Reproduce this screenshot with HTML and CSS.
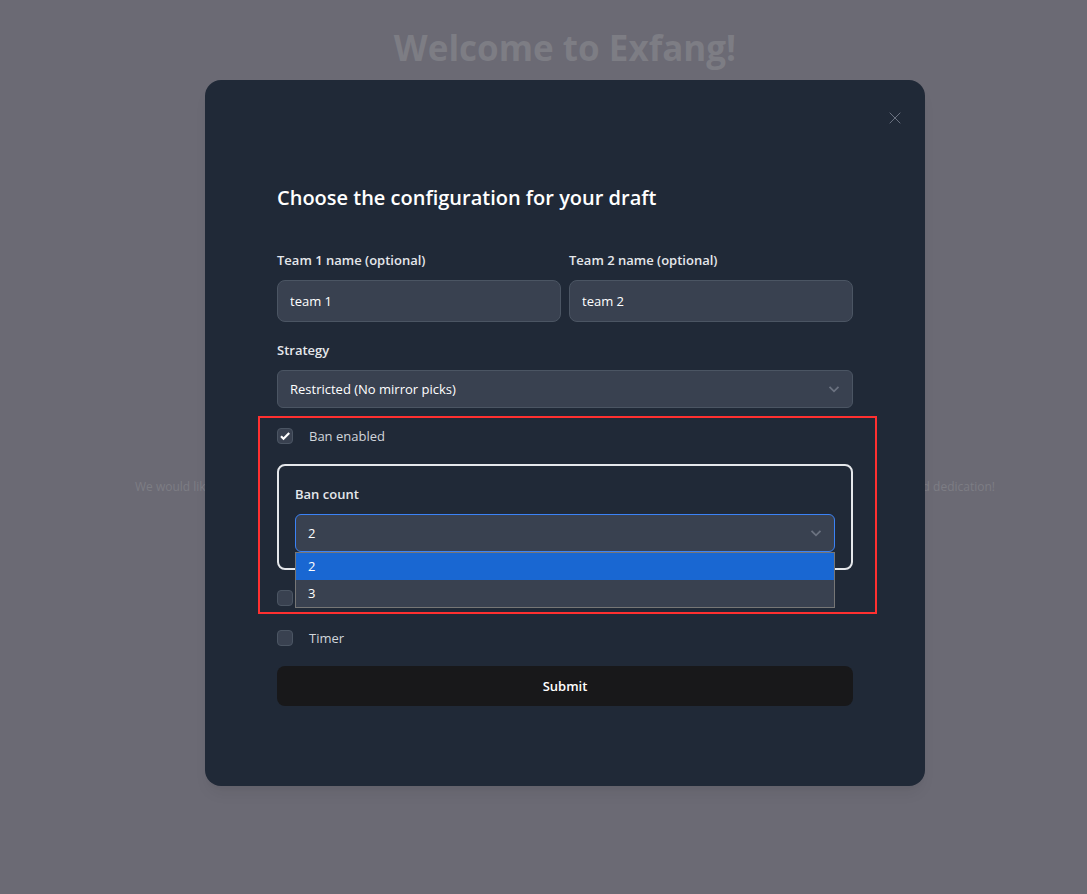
FILE: index.html
```html
<!DOCTYPE html>
<html lang="en">
<head>
  <meta charset="utf-8">
  <title>Exfang</title>
  <link rel="stylesheet" href="styles.css">
</head>
<body>
  <main class="page">
    <h1 class="page-title">Welcome to Exfang!</h1>
    <p class="thanks"><span>We would like</span><span>and dedication!</span></p>
  </main>

  <div class="backdrop">
    <section class="modal" role="dialog" aria-modal="true" aria-labelledby="dialog-title">
      <button class="close" type="button" aria-label="Close">
        <svg width="12" height="12" viewBox="0 0 12 12" fill="none" stroke="currentColor"><path d="M.7.7l10.6 10.6M11.3.7L.7 11.3"/></svg>
      </button>
      <h2 class="dialog-title" id="dialog-title">Choose the configuration for your draft</h2>
      <form class="form">
        <div class="teams">
          <div class="field">
            <label for="team1">Team 1 name (optional)</label>
            <input class="text-input" id="team1" type="text" value="team 1">
          </div>
          <div class="field">
            <label for="team2">Team 2 name (optional)</label>
            <input class="text-input" id="team2" type="text" value="team 2">
          </div>
        </div>

        <div class="field">
          <label for="strategy">Strategy</label>
          <div class="select-wrap">
            <select class="select" id="strategy"><option>Restricted (No mirror picks)</option></select>
            <svg class="chevron" width="12" height="8" viewBox="0 0 12 8" fill="none" stroke="currentColor" stroke-width="1.800"><path d="M1.500 1.800L6 6.300l4.500-4.500"/></svg>
          </div>
        </div>

        <div class="ban-group">
          <div class="check-row">
            <span class="check-wrap">
              <input class="check" id="ban" type="checkbox" checked>
              <svg class="tick" width="16" height="16" viewBox="0 0 16 16" fill="none" stroke="currentColor" stroke-width="2.200"><path d="M4 8.300l2.500 2.500L12.200 5"/></svg>
            </span>
            <label for="ban">Ban enabled</label>
          </div>
          <div class="ban-box">
            <div class="field">
              <label for="count">Ban count</label>
              <div class="select-wrap">
                <select class="select select-open" id="count"><option>2</option><option>3</option></select>
                <svg class="chevron" width="12" height="8" viewBox="0 0 12 8" fill="none" stroke="currentColor" stroke-width="1.800"><path d="M1.500 1.800L6 6.300l4.500-4.500"/></svg>
                <ul class="options" role="listbox" aria-label="Ban count">
                  <li class="option option-active" role="option" aria-selected="true">2</li>
                  <li class="option" role="option" aria-selected="false">3</li>
                </ul>
              </div>
            </div>
          </div>
          <div class="check-row">
            <input class="check" type="checkbox" aria-label="Additional option">
          </div>
          <div class="highlight" aria-hidden="true"></div>
        </div>

        <div class="check-row">
          <input class="check" id="timer" type="checkbox">
          <label for="timer">Timer</label>
        </div>
        <button class="submit" type="submit">Submit</button>
      </form>
    </section>
  </div>
</body>
</html>
```
FILE: styles.css
```css
* { box-sizing: border-box; }

body {
  margin: 0;
  background: #6b6a74;
  font-family: "Open Sans", "Noto Sans", sans-serif;
  font-size: 13px;
  line-height: 24px;
  color: #fff;
}

.page {
  min-height: 100vh;
  padding: 24px 0 0 43px;
  color: #7d7d84;
  text-align: center;
}

.page-title {
  margin: 0;
  font-size: 35px;
  line-height: 48px;
  font-weight: 700;
}

.thanks {
  display: flex;
  justify-content: space-between;
  max-width: 860px;
  margin: 403px auto 0;
  font-size: 12px;
}

.backdrop {
  position: absolute;
  inset: 0;
  display: flex;
  justify-content: center;
  align-items: flex-start;
  padding: 80px 0 0 43px;
}

.modal {
  position: relative;
  width: 100%;
  max-width: 720px;
  padding: 100px 72px 80px;
  border-radius: 16px;
  background: #202937;
  box-shadow: 0 10px 15px -3px rgba(0, 0, 0, .06), 0 4px 6px -4px rgba(0, 0, 0, .06);
}

.close {
  position: absolute;
  top: 24px;
  right: 16px;
  display: grid;
  place-items: center;
  width: 28px;
  height: 28px;
  padding: 0;
  border: 0;
  background: none;
  color: #6b7280;
}

.dialog-title {
  margin: 0 0 32px;
  font-size: 20px;
  line-height: 36px;
  font-weight: 600;
}

.form,
.ban-group {
  display: flex;
  flex-direction: column;
  gap: 16px;
}

.teams {
  display: grid;
  grid-template-columns: 1fr 1fr;
  gap: 8px;
}

.field {
  display: flex;
  flex-direction: column;
  gap: 8px;
  font-weight: 600;
  color: #e5e7eb;
}

.text-input,
.select {
  width: 100%;
  height: 42px;
  padding: 0 12px;
  border: 1px solid #4b5563;
  border-radius: 8px;
  background: #394150;
  color: #fff;
  font: inherit;
  font-weight: 400;
  outline: 0;
}

.select {
  display: block;
  height: 38px;
  border-radius: 6px;
  appearance: none;
}

.select-open { border-color: #3b82f6; }

.select-wrap { position: relative; }

.chevron {
  position: absolute;
  top: 15px;
  right: 13px;
  color: #6b7280;
  pointer-events: none;
}

.options {
  position: absolute;
  z-index: 1;
  top: 100%;
  left: 0;
  right: 0;
  margin: 0;
  padding: 0;
  border: 1px solid #767676;
  background: #394150;
  color: #fff;
  font-weight: 400;
  list-style: none;
}

.option {
  padding: 0 12px;
  line-height: 27px;
}

.option-active { background: #1967d2; }

.ban-group { position: relative; }

.ban-box {
  padding: 16px;
  border: 2px solid #e5e7eb;
  border-radius: 8px;
}

.check-row {
  display: flex;
  align-items: center;
  gap: 16px;
  height: 24px;
  color: #d1d5db;
}

.check-wrap {
  position: relative;
  display: flex;
}

.check {
  width: 16px;
  height: 16px;
  margin: 0;
  border: 1px solid #4b5563;
  border-radius: 4px;
  background: #394150;
  appearance: none;
}

.tick {
  position: absolute;
  inset: 0;
  color: #fff;
  pointer-events: none;
}

.highlight {
  position: absolute;
  inset: -8px -24px -4px -19px;
  border: 2px solid #ff3030;
  pointer-events: none;
}

.submit {
  height: 40px;
  border: 0;
  border-radius: 8px;
  background: #18181a;
  color: #fff;
  font: inherit;
  font-weight: 600;
}
```
